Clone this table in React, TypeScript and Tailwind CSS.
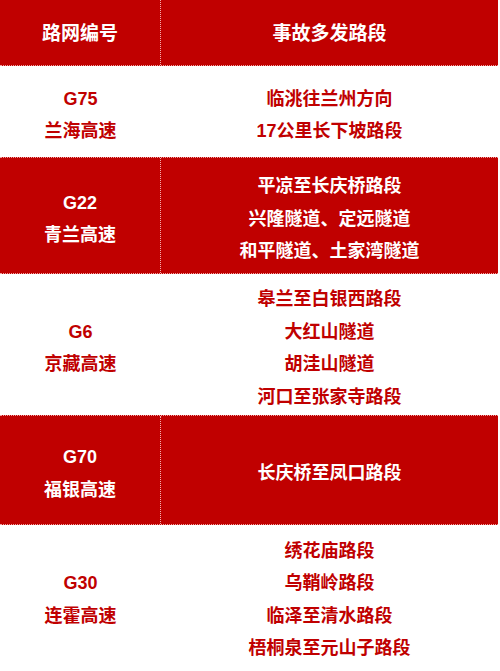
const rows = [
  { code: 'G75', name: '兰海高速', spots: ['临洮往兰州方向', '17公里长下坡路段'], h: 'h-[91px]' },
  { code: 'G22', name: '青兰高速', spots: ['平凉至长庆桥路段', '兴隆隧道、定远隧道', '和平隧道、土家湾隧道'], h: 'h-[117px]' },
  { code: 'G6', name: '京藏高速', spots: ['皋兰至白银西路段', '大红山隧道', '胡洼山隧道', '河口至张家寺路段'], h: 'h-[141px]' },
  { code: 'G70', name: '福银高速', spots: ['长庆桥至凤口路段'], h: 'h-[110px]' },
  { code: 'G30', name: '连霍高速', spots: ['绣花庙路段', '乌鞘岭路段', '临泽至清水路段', '梧桐泉至元山子路段'], h: 'h-[142px]' },
];

export default function App() {
  return (
    <div
      className="w-[500px] bg-white font-bold"
      style={{ fontFamily: '"Liberation Sans", "Noto Sans CJK SC", sans-serif' }}
    >
      <div className="w-[498px]">
        <div className="flex h-[66px] bg-[#c00000] border-b border-dotted border-[#f3a0a0] text-white text-[19px]">
          <div className="w-[161px] flex items-center justify-center border-r border-dotted border-[#f3b0b0] pt-1">
            路网编号
          </div>
          <div className="flex-1 flex items-center justify-center pt-1">事故多发路段</div>
        </div>
        {rows.map((r, i) => {
          const red = i % 2 === 1;
          return (
            <div
              key={r.code}
              className={
                red
                  ? `flex ${r.h} bg-[#c00000] text-white border-y border-dotted border-[#f3a0a0]`
                  : `flex ${r.h} bg-white text-[#c00000]`
              }
            >
              <div
                className={
                  red
                    ? 'w-[161px] flex flex-col items-center justify-center border-r border-dotted border-[#f3b0b0] pt-[7px] text-[18px] leading-[32.5px]'
                    : 'w-[161px] flex flex-col items-center justify-center pt-[7px] text-[18px] leading-[32.5px]'
                }
              >
                <div>{r.code}</div>
                <div>{r.name}</div>
              </div>
              <div className="flex-1 flex flex-col items-center justify-center pt-[7px] text-[18px] leading-[32.5px]">
                {r.spots.map((s) => (
                  <div key={s}>{s}</div>
                ))}
              </div>
            </div>
          );
        })}
      </div>
    </div>
  );
}
